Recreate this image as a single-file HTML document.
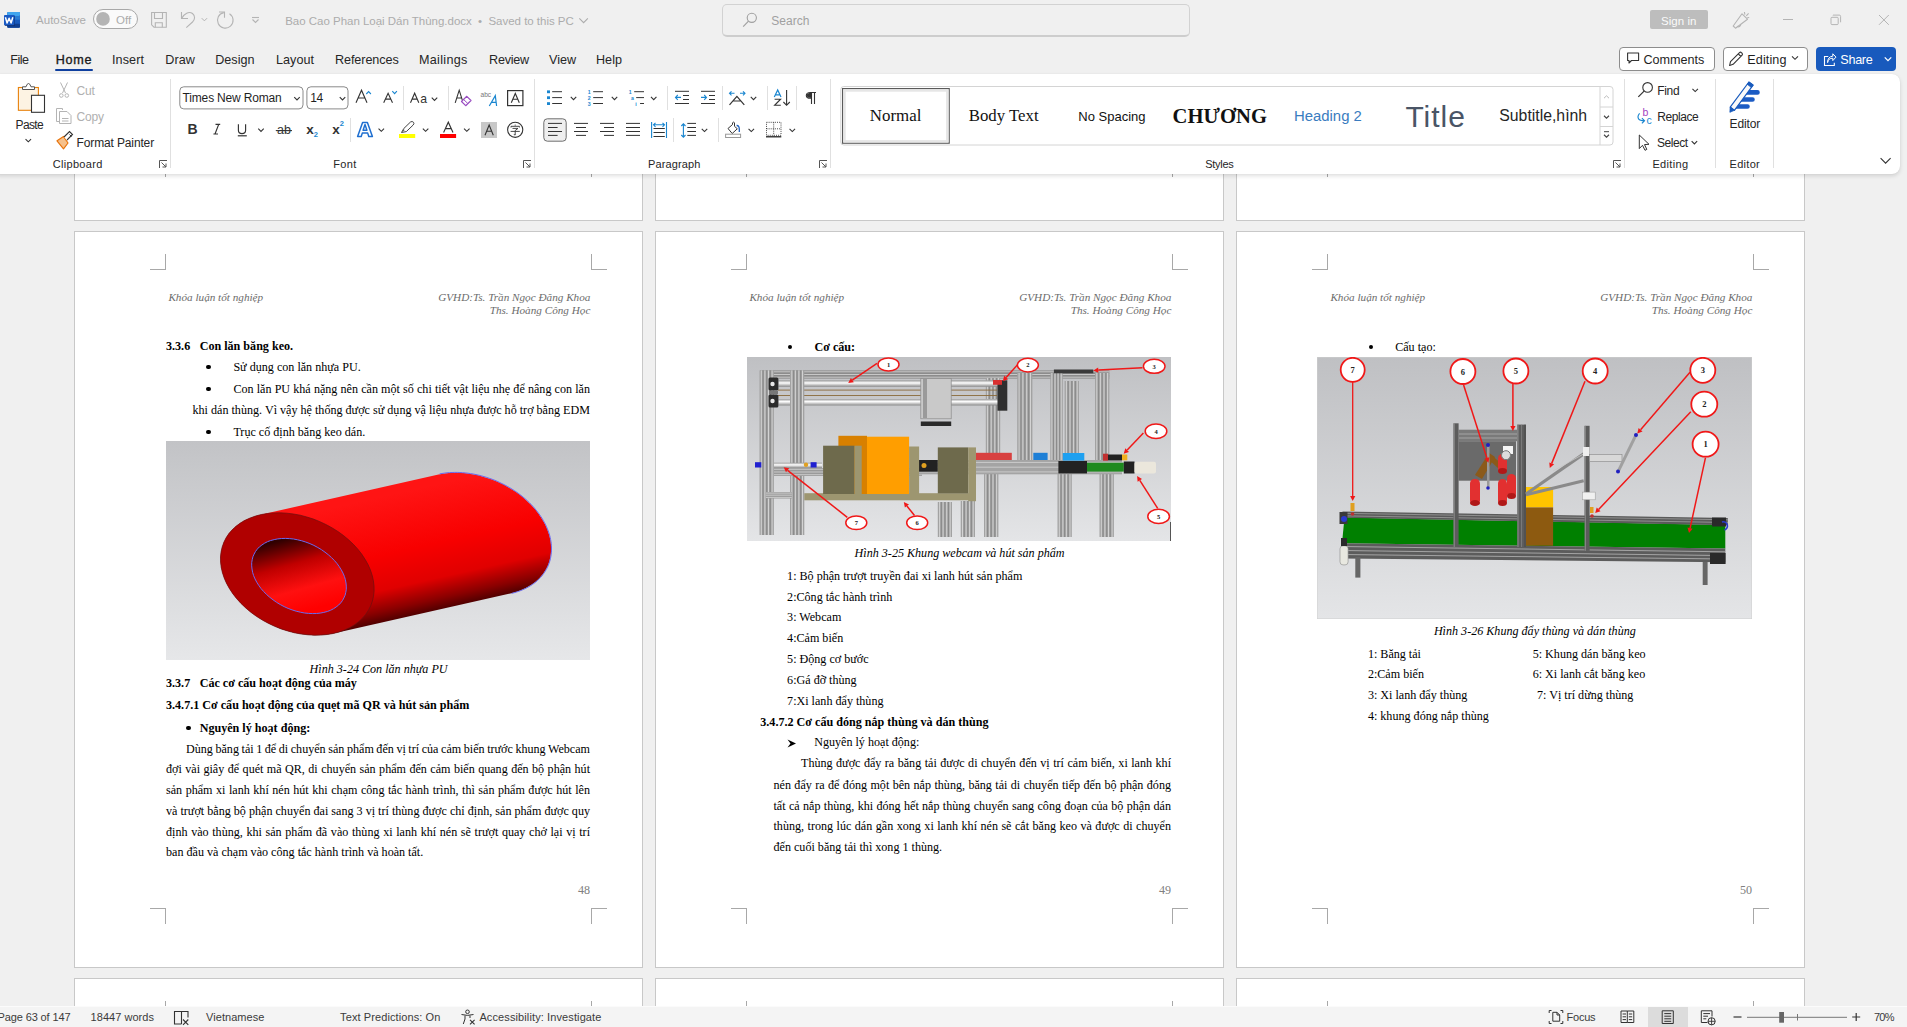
<!DOCTYPE html>
<html><head><meta charset="utf-8"><style>
*{margin:0;padding:0}
html,body{width:1907px;height:1027px;overflow:hidden}
body{position:relative;background:#f0f0f0;font-family:'Liberation Sans',sans-serif}
.a{position:absolute}
.t{position:absolute;white-space:pre}
.j{text-align:justify;text-align-last:justify;white-space:normal;overflow:hidden;height:20px}
.pg{background:#fff;border:1px solid #c8c8c8;box-sizing:border-box}
</style></head><body>
<div class="a pg" style="left:74px;top:-516px;width:569px;height:737px"></div>
<div class="a" style="left:150px;top:161px;width:16px;height:1px;background:#a8a8a8;"></div>
<div class="a" style="left:165px;top:161px;width:1px;height:16px;background:#a8a8a8;"></div>
<div class="a" style="left:591px;top:161px;width:1px;height:16px;background:#a8a8a8;"></div>
<div class="a" style="left:591px;top:161px;width:16px;height:1px;background:#a8a8a8;"></div>
<div class="a pg" style="left:655px;top:-516px;width:569px;height:737px"></div>
<div class="a" style="left:731px;top:161px;width:16px;height:1px;background:#a8a8a8;"></div>
<div class="a" style="left:746px;top:161px;width:1px;height:16px;background:#a8a8a8;"></div>
<div class="a" style="left:1172px;top:161px;width:1px;height:16px;background:#a8a8a8;"></div>
<div class="a" style="left:1172px;top:161px;width:16px;height:1px;background:#a8a8a8;"></div>
<div class="a pg" style="left:1236px;top:-516px;width:569px;height:737px"></div>
<div class="a" style="left:1312px;top:161px;width:16px;height:1px;background:#a8a8a8;"></div>
<div class="a" style="left:1327px;top:161px;width:1px;height:16px;background:#a8a8a8;"></div>
<div class="a" style="left:1753px;top:161px;width:1px;height:16px;background:#a8a8a8;"></div>
<div class="a" style="left:1753px;top:161px;width:16px;height:1px;background:#a8a8a8;"></div>
<div class="a pg" style="left:74px;top:978px;width:569px;height:737px"></div>
<div class="a" style="left:150px;top:1016px;width:16px;height:1px;background:#a8a8a8;"></div>
<div class="a" style="left:165px;top:1001px;width:1px;height:16px;background:#a8a8a8;"></div>
<div class="a" style="left:591px;top:1001px;width:1px;height:16px;background:#a8a8a8;"></div>
<div class="a" style="left:591px;top:1016px;width:16px;height:1px;background:#a8a8a8;"></div>
<div class="a pg" style="left:655px;top:978px;width:569px;height:737px"></div>
<div class="a" style="left:731px;top:1016px;width:16px;height:1px;background:#a8a8a8;"></div>
<div class="a" style="left:746px;top:1001px;width:1px;height:16px;background:#a8a8a8;"></div>
<div class="a" style="left:1172px;top:1001px;width:1px;height:16px;background:#a8a8a8;"></div>
<div class="a" style="left:1172px;top:1016px;width:16px;height:1px;background:#a8a8a8;"></div>
<div class="a pg" style="left:1236px;top:978px;width:569px;height:737px"></div>
<div class="a" style="left:1312px;top:1016px;width:16px;height:1px;background:#a8a8a8;"></div>
<div class="a" style="left:1327px;top:1001px;width:1px;height:16px;background:#a8a8a8;"></div>
<div class="a" style="left:1753px;top:1001px;width:1px;height:16px;background:#a8a8a8;"></div>
<div class="a" style="left:1753px;top:1016px;width:16px;height:1px;background:#a8a8a8;"></div>
<div class="a pg" style="left:74px;top:231px;width:569px;height:737px"></div>
<div class="a" style="left:150px;top:269px;width:16px;height:1px;background:#a8a8a8;"></div>
<div class="a" style="left:165px;top:254px;width:1px;height:16px;background:#a8a8a8;"></div>
<div class="a" style="left:591px;top:254px;width:1px;height:16px;background:#a8a8a8;"></div>
<div class="a" style="left:591px;top:269px;width:16px;height:1px;background:#a8a8a8;"></div>
<div class="a" style="left:150px;top:908px;width:16px;height:1px;background:#a8a8a8;"></div>
<div class="a" style="left:165px;top:908px;width:1px;height:16px;background:#a8a8a8;"></div>
<div class="a" style="left:591px;top:908px;width:1px;height:16px;background:#a8a8a8;"></div>
<div class="a" style="left:591px;top:908px;width:16px;height:1px;background:#a8a8a8;"></div>
<div class="t" style="left:168.40px;top:286.82px;font-size:11.2px;line-height:20px;color:#6c6c6c;font-family:'Liberation Serif',serif;font-style:italic;">Khóa luận tốt nghiệp</div>
<div class="t" style="left:340.40px;top:286.82px;font-size:11.2px;line-height:20px;color:#6c6c6c;font-family:'Liberation Serif',serif;font-style:italic;width:250.00px;text-align:right;">GVHD:Ts. Trần Ngọc Đăng Khoa</div>
<div class="t" style="left:340.40px;top:299.52px;font-size:11.2px;line-height:20px;color:#6c6c6c;font-family:'Liberation Serif',serif;font-style:italic;width:250.00px;text-align:right;">Ths. Hoàng Công Học</div>
<div class="t" style="left:166.00px;top:335.92px;font-size:12.1px;line-height:20px;color:#000;font-family:'Liberation Serif',serif;font-weight:bold;">3.3.6</div>
<div class="t" style="left:199.70px;top:335.92px;font-size:12.1px;line-height:20px;color:#000;font-family:'Liberation Serif',serif;font-weight:bold;">Con lăn băng keo.</div>
<div class="a" style="left:206.30px;top:365.10px;width:4.4px;height:4.4px;border-radius:50%;background:#000"></div>
<div class="t" style="left:233.40px;top:356.92px;font-size:12.1px;line-height:20px;color:#000;font-family:'Liberation Serif',serif;">Sử dụng con lăn nhựa PU.</div>
<div class="a" style="left:206.30px;top:387.10px;width:4.4px;height:4.4px;border-radius:50%;background:#000"></div>
<div class="t" style="word-spacing:0.134px;left:233.40px;top:378.92px;font-size:12.1px;line-height:20px;color:#000;font-family:'Liberation Serif',serif;">Con lăn PU khá nặng nên cần một số chi tiết vật liệu nhẹ để nâng con lăn</div>
<div class="t" style="word-spacing:0.018px;left:192.50px;top:399.92px;font-size:12.1px;line-height:20px;color:#000;font-family:'Liberation Serif',serif;">khi dán thùng. Vì vậy hệ thống được sử dụng vậ liệu nhựa được hỗ trợ bằng EDM</div>
<div class="a" style="left:206.30px;top:430.10px;width:4.4px;height:4.4px;border-radius:50%;background:#000"></div>
<div class="t" style="left:233.40px;top:421.92px;font-size:12.1px;line-height:20px;color:#000;font-family:'Liberation Serif',serif;">Trục cố định băng keo dán.</div>
<svg class="a" style="left:166px;top:441px;" width="424" height="219" viewBox="0 0 424 219"><defs><linearGradient id="bg1" x1="0" y1="0" x2="0" y2="1"><stop offset="0" stop-color="#c2c3c6"/><stop offset="1" stop-color="#e6e7e9"/></linearGradient><linearGradient id="body1" gradientUnits="userSpaceOnUse" x1="232" y1="52" x2="260" y2="176"><stop offset="0" stop-color="#ff1414"/><stop offset="0.45" stop-color="#f80000"/><stop offset="0.72" stop-color="#e00000"/><stop offset="0.88" stop-color="#8a0000"/><stop offset="1" stop-color="#3a0000"/></linearGradient><linearGradient id="hole1" gradientUnits="userSpaceOnUse" x1="120" y1="98" x2="140" y2="170"><stop offset="0" stop-color="#300000"/><stop offset="0.35" stop-color="#c00000"/><stop offset="0.7" stop-color="#ff1010"/><stop offset="1" stop-color="#ff0000"/></linearGradient></defs><rect width="424" height="219" fill="url(#bg1)"/><path d="M54.5 115.8 L55.1 110.8 L56.2 105.9 L57.9 101.2 L60.1 96.8 L62.9 92.6 L66.2 88.8 L70.0 85.2 L74.3 82.1 L79.0 79.3 L84.1 77.0 L89.6 75.0 L95.4 73.5 L272.5 33.4 L278.6 32.4 L284.8 31.8 L291.3 31.7 L297.9 32.1 L304.6 32.9 L311.3 34.1 L317.9 35.9 L324.6 38.0 L331.0 40.6 L337.4 43.6 L343.4 46.9 L349.3 50.6 L354.8 54.6 L359.9 58.9 L364.7 63.5 L369.1 68.3 L372.9 73.2 L376.3 78.4 L379.2 83.6 L381.5 88.9 L383.3 94.3 L384.5 99.6 L385.1 104.9 L385.2 110.0 L384.6 115.1 L383.5 120.0 L381.8 124.7 L379.6 129.1 L376.8 133.3 L373.5 137.1 L369.6 140.7 L365.4 143.8 L360.7 146.6 L355.6 148.9 L350.1 150.9 L344.3 152.4 L167.2 192.5 L161.2 193.5 L154.9 194.1 L148.4 194.2 L141.8 193.8 L135.1 193.0 L128.4 191.8 L121.8 190.0 L115.2 187.9 L108.7 185.3 L102.3 182.3 L96.3 179.0 L90.4 175.3 L84.9 171.3 L79.8 167.0 L75.0 162.4 L70.6 157.6 L66.8 152.7 L63.4 147.5 L60.5 142.3 L58.2 137.0 L56.4 131.6 L55.2 126.3 L54.6 121.0 Z" fill="url(#body1)"/><path d="M273.6 32.9 L276.0 32.5 L278.5 32.1 L281.0 31.8 L283.5 31.6 L286.1 31.5 L288.6 31.4 L291.3 31.4 L293.9 31.5 L296.5 31.7 L299.2 31.9 L301.9 32.2 L304.6 32.6 L307.3 33.0 L310.0 33.6 L312.7 34.2 L315.3 34.8 L318.0 35.6 L320.7 36.4 L323.3 37.3 L326.0 38.2 L328.6 39.2 L331.2 40.3 L333.7 41.5 L336.2 42.7 L338.7 43.9 L341.2 45.3 L343.6 46.6 L346.0 48.1 L348.3 49.6 L350.6 51.1 L352.8 52.7 L355.0 54.4 L357.1 56.1 L359.2 57.8 L361.2 59.6 L363.1 61.4 L365.0 63.3 L366.8 65.2 L368.5 67.1 L370.1 69.1 L371.7 71.1 L373.2 73.1 L374.6 75.2 L376.0 77.2 L377.2 79.3 L378.4 81.4 L379.5 83.5 L380.5 85.7 L381.4 87.8 L382.2 89.9 L383.0 92.1 L383.6 94.2 L384.2 96.4 L384.6 98.5 L385.0 100.6 L385.3 102.8 L385.4 104.9 L385.5 107.0 L385.5 109.1 L385.4 111.1 L385.2 113.2 L384.9 115.2 L384.5 117.2 L384.1 119.1 L383.5 121.0 L382.8 122.9 L382.1 124.8 L381.3 126.6 L380.3 128.4 L379.3 130.1 L378.2 131.8 L377.0 133.4 L375.8 135.0 L374.4 136.6 L373.0 138.1 L371.5 139.5 L369.9 140.9 L368.2 142.2 L366.5 143.4 L364.7 144.6 L362.8 145.7 L360.8 146.8 L358.8 147.8 L356.8 148.7 L354.6 149.6 L352.5 150.4 L350.2 151.1 L347.9 151.8 L345.6 152.4" fill="none" stroke="#6a6af0" stroke-width="1"/><path d="M204.7 164.8 L202.5 169.2 L199.7 173.4 L196.4 177.2 L192.6 180.7 L188.3 183.9 L183.6 186.7 L178.5 189.0 L173.0 191.0 L167.2 192.5 L161.2 193.5 L154.9 194.1 L148.4 194.2 L141.8 193.8 L135.1 193.0 L128.4 191.8 L121.8 190.0 L115.1 187.9 L108.7 185.3 L102.3 182.3 L96.3 179.0 L90.4 175.3 L84.9 171.3 L79.8 167.0 L75.0 162.4 L70.6 157.6 L66.8 152.7 L63.4 147.5 L60.5 142.3 L58.2 137.0 L56.4 131.6 L55.2 126.3 L54.6 121.0 L54.5 115.9 L55.1 110.8 L56.2 105.9 L57.9 101.2 L60.1 96.8 L62.9 92.6 L66.2 88.8 L70.0 85.3 L74.3 82.1 L79.0 79.3 L84.1 77.0 L89.6 75.0 L95.4 73.5 L101.4 72.5 L107.7 71.9 L114.2 71.8 L120.8 72.2 L127.5 73.0 L134.2 74.2 L140.8 76.0 L147.5 78.1 L153.9 80.7 L160.3 83.7 L166.3 87.0 L172.2 90.7 L177.7 94.7 L182.8 99.0 L187.6 103.6 L192.0 108.4 L195.8 113.3 L199.2 118.5 L202.1 123.7 L204.4 129.0 L206.2 134.4 L207.4 139.7 L208.0 145.0 L208.1 150.1 L207.5 155.2 L206.4 160.1 Z" fill="#b00000" stroke="#6a1010" stroke-width="0.7"/><path d="M177.9 156.9 L176.5 159.5 L174.7 161.9 L172.6 164.1 L170.1 166.0 L167.4 167.8 L164.5 169.3 L161.3 170.5 L157.8 171.4 L154.2 172.1 L150.5 172.5 L146.6 172.6 L142.6 172.4 L138.5 172.0 L134.4 171.2 L130.2 170.2 L126.1 168.9 L122.1 167.4 L118.1 165.6 L114.2 163.5 L110.5 161.3 L107.0 158.8 L103.6 156.2 L100.5 153.4 L97.6 150.5 L95.0 147.5 L92.7 144.3 L90.7 141.1 L89.0 137.9 L87.6 134.6 L86.6 131.3 L86.0 128.0 L85.7 124.9 L85.7 121.7 L86.2 118.7 L86.9 115.8 L88.1 113.1 L89.5 110.5 L91.3 108.1 L93.4 105.9 L95.9 104.0 L98.6 102.2 L101.5 100.7 L104.7 99.5 L108.2 98.6 L111.8 97.9 L115.5 97.5 L119.4 97.4 L123.4 97.6 L127.5 98.0 L131.6 98.8 L135.8 99.8 L139.9 101.1 L143.9 102.6 L147.9 104.4 L151.8 106.5 L155.5 108.7 L159.0 111.2 L162.4 113.8 L165.5 116.6 L168.4 119.5 L171.0 122.5 L173.3 125.7 L175.3 128.9 L177.0 132.1 L178.4 135.4 L179.4 138.7 L180.0 142.0 L180.3 145.1 L180.3 148.3 L179.8 151.3 L179.1 154.2 Z" fill="url(#hole1)" stroke="#6a6af0" stroke-width="1"/></svg>
<div class="t" style="left:309.60px;top:659.42px;font-size:12.1px;line-height:20px;color:#000;font-family:'Liberation Serif',serif;font-style:italic;">Hình 3-24 Con lăn nhựa PU</div>
<div class="t" style="left:166.00px;top:673.42px;font-size:12.1px;line-height:20px;color:#000;font-family:'Liberation Serif',serif;font-weight:bold;">3.3.7</div>
<div class="t" style="left:199.70px;top:673.42px;font-size:12.1px;line-height:20px;color:#000;font-family:'Liberation Serif',serif;font-weight:bold;">Các cơ cấu hoạt động của máy</div>
<div class="t" style="left:166.00px;top:694.72px;font-size:12.1px;line-height:20px;color:#000;font-family:'Liberation Serif',serif;font-weight:bold;">3.4.7.1 Cơ cấu hoạt động của quẹt mã QR và hút sản phẩm</div>
<div class="a" style="left:186.40px;top:725.70px;width:4.4px;height:4.4px;border-radius:50%;background:#000"></div>
<div class="t" style="left:199.70px;top:717.52px;font-size:12.1px;line-height:20px;color:#000;font-family:'Liberation Serif',serif;font-weight:bold;">Nguyên lý hoạt động:</div>
<div class="t" style="word-spacing:-0.456px;left:186.00px;top:738.52px;font-size:12.1px;line-height:20px;color:#000;font-family:'Liberation Serif',serif;">Dùng băng tải 1 để di chuyển sản phẩm đến vị trí của cảm biến trước khung Webcam</div>
<div class="t" style="word-spacing:0.418px;left:166.00px;top:759.32px;font-size:12.1px;line-height:20px;color:#000;font-family:'Liberation Serif',serif;">đợi vài giây để quét mã QR, di chuyển sản phẩm đến cảm biến quang đến bộ phận hút</div>
<div class="t" style="word-spacing:0.501px;left:166.00px;top:780.12px;font-size:12.1px;line-height:20px;color:#000;font-family:'Liberation Serif',serif;">sản phẩm xi lanh khí nén hút khi chạm công tắc hành trình, thì sản phẩm được hút lên</div>
<div class="t" style="word-spacing:0.032px;left:166.00px;top:800.92px;font-size:12.1px;line-height:20px;color:#000;font-family:'Liberation Serif',serif;">và trượt bằng bộ phận chuyển đai sang 3 vị trí thùng được chỉ định, sản phẩm được quy</div>
<div class="t" style="word-spacing:0.614px;left:166.00px;top:821.62px;font-size:12.1px;line-height:20px;color:#000;font-family:'Liberation Serif',serif;">định vào thùng, khi sản phẩm đã vào thùng xi lanh khí nén sẽ trượt quay chở lại vị trí</div>
<div class="t" style="left:166.00px;top:842.42px;font-size:12.1px;line-height:20px;color:#000;font-family:'Liberation Serif',serif;">ban đầu và chạm vào công tắc hành trình và hoàn tất.</div>
<div class="t" style="left:550.00px;top:880.42px;font-size:12.1px;line-height:20px;color:#808080;font-family:'Liberation Serif',serif;width:40.00px;text-align:right;">48</div>
<div class="a pg" style="left:655px;top:231px;width:569px;height:737px"></div>
<div class="a" style="left:731px;top:269px;width:16px;height:1px;background:#a8a8a8;"></div>
<div class="a" style="left:746px;top:254px;width:1px;height:16px;background:#a8a8a8;"></div>
<div class="a" style="left:1172px;top:254px;width:1px;height:16px;background:#a8a8a8;"></div>
<div class="a" style="left:1172px;top:269px;width:16px;height:1px;background:#a8a8a8;"></div>
<div class="a" style="left:731px;top:908px;width:16px;height:1px;background:#a8a8a8;"></div>
<div class="a" style="left:746px;top:908px;width:1px;height:16px;background:#a8a8a8;"></div>
<div class="a" style="left:1172px;top:908px;width:1px;height:16px;background:#a8a8a8;"></div>
<div class="a" style="left:1172px;top:908px;width:16px;height:1px;background:#a8a8a8;"></div>
<div class="t" style="left:749.40px;top:286.82px;font-size:11.2px;line-height:20px;color:#6c6c6c;font-family:'Liberation Serif',serif;font-style:italic;">Khóa luận tốt nghiệp</div>
<div class="t" style="left:921.40px;top:286.82px;font-size:11.2px;line-height:20px;color:#6c6c6c;font-family:'Liberation Serif',serif;font-style:italic;width:250.00px;text-align:right;">GVHD:Ts. Trần Ngọc Đăng Khoa</div>
<div class="t" style="left:921.40px;top:299.52px;font-size:11.2px;line-height:20px;color:#6c6c6c;font-family:'Liberation Serif',serif;font-style:italic;width:250.00px;text-align:right;">Ths. Hoàng Công Học</div>
<div class="a" style="left:787.50px;top:345.10px;width:4.4px;height:4.4px;border-radius:50%;background:#000"></div>
<div class="t" style="left:814.50px;top:336.92px;font-size:12.1px;line-height:20px;color:#000;font-family:'Liberation Serif',serif;font-weight:bold;">Cơ cấu:</div>
<svg class="a" style="left:747px;top:357px;" width="424" height="184" viewBox="0 0 424 184"><defs><linearGradient id="bg2" x1="0" y1="0" x2="0" y2="1"><stop offset="0" stop-color="#bfc0c3"/><stop offset="1" stop-color="#e4e5e7"/></linearGradient><linearGradient id="rod" x1="0" y1="0" x2="0" y2="1"><stop offset="0" stop-color="#9a9a9a"/><stop offset="0.4" stop-color="#ffffff"/><stop offset="1" stop-color="#8a8a8a"/></linearGradient></defs><rect width="424" height="184" fill="url(#bg2)"/><rect x="13.0" y="13.4" width="349.4" height="8.2" fill="#8c8c8c"/><path d="M13.0 14.8 H362.4" stroke="#cfcfcf" stroke-width="0.9"/><path d="M13.0 17.5 H362.4" stroke="#cfcfcf" stroke-width="0.9"/><path d="M13.0 20.2 H362.4" stroke="#cfcfcf" stroke-width="0.9"/><rect x="238.8" y="21.0" width="14.4" height="83.0" fill="#a2a2a2"/><path d="M240.6 21.0 V104.0" stroke="#d8d8d8" stroke-width="0.9"/><path d="M242.4 21.0 V104.0" stroke="#707070" stroke-width="0.5"/><path d="M244.2 21.0 V104.0" stroke="#d8d8d8" stroke-width="0.9"/><path d="M246.0 21.0 V104.0" stroke="#707070" stroke-width="0.5"/><path d="M247.8 21.0 V104.0" stroke="#d8d8d8" stroke-width="0.9"/><path d="M249.6 21.0 V104.0" stroke="#707070" stroke-width="0.5"/><path d="M251.4 21.0 V104.0" stroke="#d8d8d8" stroke-width="0.9"/><rect x="270.2" y="16.0" width="15.2" height="88.0" fill="#a2a2a2"/><path d="M272.1 16.0 V104.0" stroke="#d8d8d8" stroke-width="0.9"/><path d="M274.0 16.0 V104.0" stroke="#707070" stroke-width="0.5"/><path d="M275.9 16.0 V104.0" stroke="#d8d8d8" stroke-width="0.9"/><path d="M277.8 16.0 V104.0" stroke="#707070" stroke-width="0.5"/><path d="M279.7 16.0 V104.0" stroke="#d8d8d8" stroke-width="0.9"/><path d="M281.6 16.0 V104.0" stroke="#707070" stroke-width="0.5"/><path d="M283.5 16.0 V104.0" stroke="#d8d8d8" stroke-width="0.9"/><rect x="303.3" y="16.0" width="12.5" height="88.0" fill="#a2a2a2"/><path d="M304.9 16.0 V104.0" stroke="#d8d8d8" stroke-width="0.9"/><path d="M306.4 16.0 V104.0" stroke="#707070" stroke-width="0.5"/><path d="M308.0 16.0 V104.0" stroke="#d8d8d8" stroke-width="0.9"/><path d="M309.6 16.0 V104.0" stroke="#707070" stroke-width="0.5"/><path d="M311.1 16.0 V104.0" stroke="#d8d8d8" stroke-width="0.9"/><path d="M312.7 16.0 V104.0" stroke="#707070" stroke-width="0.5"/><path d="M314.2 16.0 V104.0" stroke="#d8d8d8" stroke-width="0.9"/><rect x="317.6" y="24.0" width="14.4" height="80.0" fill="#a2a2a2"/><path d="M319.4 24.0 V104.0" stroke="#d8d8d8" stroke-width="0.9"/><path d="M321.2 24.0 V104.0" stroke="#707070" stroke-width="0.5"/><path d="M323.0 24.0 V104.0" stroke="#d8d8d8" stroke-width="0.9"/><path d="M324.8 24.0 V104.0" stroke="#707070" stroke-width="0.5"/><path d="M326.6 24.0 V104.0" stroke="#d8d8d8" stroke-width="0.9"/><path d="M328.4 24.0 V104.0" stroke="#707070" stroke-width="0.5"/><path d="M330.2 24.0 V104.0" stroke="#d8d8d8" stroke-width="0.9"/><rect x="348.0" y="16.0" width="14.4" height="88.0" fill="#a2a2a2"/><path d="M349.8 16.0 V104.0" stroke="#d8d8d8" stroke-width="0.9"/><path d="M351.6 16.0 V104.0" stroke="#707070" stroke-width="0.5"/><path d="M353.4 16.0 V104.0" stroke="#d8d8d8" stroke-width="0.9"/><path d="M355.2 16.0 V104.0" stroke="#707070" stroke-width="0.5"/><path d="M357.0 16.0 V104.0" stroke="#d8d8d8" stroke-width="0.9"/><path d="M358.8 16.0 V104.0" stroke="#707070" stroke-width="0.5"/><path d="M360.6 16.0 V104.0" stroke="#d8d8d8" stroke-width="0.9"/><rect x="31.4" y="23.3" width="225" height="6.5" fill="url(#rod)"/><rect x="31.4" y="42" width="225" height="6.5" fill="url(#rod)"/><path d="M31 33.1 H250 M31 38.5 H250" stroke="#8a6a3a" stroke-width="0.9"/><rect x="250.5" y="23.3" width="9.8" height="30.4" fill="#2f2f2f"/><rect x="246" y="23" width="9" height="4.8" fill="#d83030"/><rect x="173.8" y="21.5" width="30.4" height="40.3" fill="#c9c9c9" stroke="#8a8a8a" stroke-width="0.7"/><rect x="176" y="22" width="4" height="39" fill="#9a9a9a"/><rect x="173.8" y="64.5" width="30.4" height="4.5" fill="#2a2a2a"/><rect x="306.9" y="12.5" width="39.4" height="3.8" fill="#3a3a3a"/><rect x="12.5" y="13.4" width="14.4" height="164.6" fill="#a2a2a2"/><path d="M14.3 13.4 V178.0" stroke="#d8d8d8" stroke-width="0.9"/><path d="M16.1 13.4 V178.0" stroke="#707070" stroke-width="0.5"/><path d="M17.9 13.4 V178.0" stroke="#d8d8d8" stroke-width="0.9"/><path d="M19.7 13.4 V178.0" stroke="#707070" stroke-width="0.5"/><path d="M21.5 13.4 V178.0" stroke="#d8d8d8" stroke-width="0.9"/><path d="M23.3 13.4 V178.0" stroke="#707070" stroke-width="0.5"/><path d="M25.1 13.4 V178.0" stroke="#d8d8d8" stroke-width="0.9"/><rect x="43.0" y="13.4" width="14.3" height="164.6" fill="#a2a2a2"/><path d="M44.8 13.4 V178.0" stroke="#d8d8d8" stroke-width="0.9"/><path d="M46.6 13.4 V178.0" stroke="#707070" stroke-width="0.5"/><path d="M48.4 13.4 V178.0" stroke="#d8d8d8" stroke-width="0.9"/><path d="M50.1 13.4 V178.0" stroke="#707070" stroke-width="0.5"/><path d="M51.9 13.4 V178.0" stroke="#d8d8d8" stroke-width="0.9"/><path d="M53.7 13.4 V178.0" stroke="#707070" stroke-width="0.5"/><path d="M55.5 13.4 V178.0" stroke="#d8d8d8" stroke-width="0.9"/><rect x="21.5" y="20.6" width="9.9" height="13" rx="1.5" fill="#2b2b2b"/><rect x="21.5" y="37.5" width="9.9" height="13" rx="1.5" fill="#2b2b2b"/><circle cx="25.5" cy="27" r="2.2" fill="#e8e8e8"/><circle cx="25.5" cy="44" r="2.2" fill="#e8e8e8"/><rect x="22" y="34" width="9" height="3" fill="#777"/><rect x="27.0" y="111.0" width="148.0" height="8.0" fill="#9a9a9a"/><path d="M27.0 112.3 H175.0" stroke="#cfcfcf" stroke-width="0.9"/><path d="M27.0 115.0 H175.0" stroke="#cfcfcf" stroke-width="0.9"/><path d="M27.0 117.7 H175.0" stroke="#cfcfcf" stroke-width="0.9"/><rect x="18.8" y="135.0" width="26.0" height="6.5" fill="#9a9a9a"/><path d="M18.8 136.1 H44.8" stroke="#cfcfcf" stroke-width="0.9"/><path d="M18.8 138.2 H44.8" stroke="#cfcfcf" stroke-width="0.9"/><path d="M18.8 140.4 H44.8" stroke="#cfcfcf" stroke-width="0.9"/><rect x="27" y="105.7" width="48" height="5.3" fill="url(#rod)"/><rect x="8" y="105.2" width="6.3" height="5.3" fill="#2020d0"/><rect x="63.6" y="105.2" width="6" height="5.3" fill="#2020d0"/><circle cx="59" cy="107.8" r="2.2" fill="#e0a020"/><rect x="190.8" y="145.0" width="14.2" height="35.0" fill="#a2a2a2"/><path d="M192.6 145.0 V180.0" stroke="#d8d8d8" stroke-width="0.9"/><path d="M194.4 145.0 V180.0" stroke="#707070" stroke-width="0.5"/><path d="M196.1 145.0 V180.0" stroke="#d8d8d8" stroke-width="0.9"/><path d="M197.9 145.0 V180.0" stroke="#707070" stroke-width="0.5"/><path d="M199.7 145.0 V180.0" stroke="#d8d8d8" stroke-width="0.9"/><path d="M201.5 145.0 V180.0" stroke="#707070" stroke-width="0.5"/><path d="M203.2 145.0 V180.0" stroke="#d8d8d8" stroke-width="0.9"/><rect x="213.7" y="144.0" width="14.3" height="36.0" fill="#a2a2a2"/><path d="M215.5 144.0 V180.0" stroke="#d8d8d8" stroke-width="0.9"/><path d="M217.3 144.0 V180.0" stroke="#707070" stroke-width="0.5"/><path d="M219.1 144.0 V180.0" stroke="#d8d8d8" stroke-width="0.9"/><path d="M220.8 144.0 V180.0" stroke="#707070" stroke-width="0.5"/><path d="M222.6 144.0 V180.0" stroke="#d8d8d8" stroke-width="0.9"/><path d="M224.4 144.0 V180.0" stroke="#707070" stroke-width="0.5"/><path d="M226.2 144.0 V180.0" stroke="#d8d8d8" stroke-width="0.9"/><rect x="237.0" y="117.0" width="14.4" height="63.0" fill="#a2a2a2"/><path d="M238.8 117.0 V180.0" stroke="#d8d8d8" stroke-width="0.9"/><path d="M240.6 117.0 V180.0" stroke="#707070" stroke-width="0.5"/><path d="M242.4 117.0 V180.0" stroke="#d8d8d8" stroke-width="0.9"/><path d="M244.2 117.0 V180.0" stroke="#707070" stroke-width="0.5"/><path d="M246.0 117.0 V180.0" stroke="#d8d8d8" stroke-width="0.9"/><path d="M247.8 117.0 V180.0" stroke="#707070" stroke-width="0.5"/><path d="M249.6 117.0 V180.0" stroke="#d8d8d8" stroke-width="0.9"/><rect x="310.5" y="117.0" width="14.3" height="63.0" fill="#a2a2a2"/><path d="M312.3 117.0 V180.0" stroke="#d8d8d8" stroke-width="0.9"/><path d="M314.1 117.0 V180.0" stroke="#707070" stroke-width="0.5"/><path d="M315.9 117.0 V180.0" stroke="#d8d8d8" stroke-width="0.9"/><path d="M317.6 117.0 V180.0" stroke="#707070" stroke-width="0.5"/><path d="M319.4 117.0 V180.0" stroke="#d8d8d8" stroke-width="0.9"/><path d="M321.2 117.0 V180.0" stroke="#707070" stroke-width="0.5"/><path d="M323.0 117.0 V180.0" stroke="#d8d8d8" stroke-width="0.9"/><rect x="352.5" y="117.0" width="14.4" height="63.0" fill="#a2a2a2"/><path d="M354.3 117.0 V180.0" stroke="#d8d8d8" stroke-width="0.9"/><path d="M356.1 117.0 V180.0" stroke="#707070" stroke-width="0.5"/><path d="M357.9 117.0 V180.0" stroke="#d8d8d8" stroke-width="0.9"/><path d="M359.7 117.0 V180.0" stroke="#707070" stroke-width="0.5"/><path d="M361.5 117.0 V180.0" stroke="#d8d8d8" stroke-width="0.9"/><path d="M363.3 117.0 V180.0" stroke="#707070" stroke-width="0.5"/><path d="M365.1 117.0 V180.0" stroke="#d8d8d8" stroke-width="0.9"/><rect x="172.0" y="103.0" width="203.0" height="14.3" fill="#a4a4a4"/><path d="M172.0 105.4 H375.0" stroke="#cfcfcf" stroke-width="0.9"/><path d="M172.0 110.2 H375.0" stroke="#cfcfcf" stroke-width="0.9"/><path d="M172.0 114.9 H375.0" stroke="#cfcfcf" stroke-width="0.9"/><rect x="229" y="95.8" width="35.8" height="7.2" fill="#d84040"/><rect x="286.3" y="95.8" width="14.3" height="7.2" fill="#1e7fd6"/><rect x="315.8" y="96" width="21.5" height="7.6" fill="#1ea0f0"/><rect x="311.4" y="104" width="28.6" height="12.4" fill="#222"/><rect x="340" y="105.7" width="36.8" height="8.9" fill="#1f8a1f"/><rect x="376.8" y="104.5" width="10.7" height="12" fill="#222"/><rect x="387.5" y="104.8" width="21.5" height="11.6" rx="2" fill="#ebe7dc"/><rect x="356" y="96.7" width="5" height="7" fill="#c03030"/><rect x="361" y="97.5" width="14" height="5.8" fill="#222"/><rect x="375" y="97.5" width="5.3" height="5.8" fill="#f0b020"/><rect x="172" y="103" width="18.8" height="11.7" fill="#222"/><circle cx="177" cy="108.5" r="2.5" fill="#e0a020"/><rect x="57.3" y="136.2" width="171.7" height="7.1" fill="#9d9670"/><rect x="91.4" y="78.8" width="28.6" height="58.2" fill="#d88000"/><rect x="120" y="79.7" width="42.1" height="57.3" fill="#ff9e00"/><rect x="76.1" y="88.7" width="31.4" height="48.3" fill="#6e6a4c"/><rect x="107.5" y="88.7" width="7.2" height="48.3" fill="#9d9670"/><rect x="162.1" y="89.5" width="10" height="47.5" fill="#9d9670"/><rect x="190.8" y="90.4" width="30.4" height="46" fill="#6e6a4c"/><rect x="221.2" y="90.4" width="7.8" height="53.8" fill="#9d9670"/><path d="M130.0 6.3 L105.3 23.2" stroke="#f01818" stroke-width="1.5"/><path d="M101.2 26.0 L103.9 21.0 L106.8 25.3 Z" fill="#f01818"/><ellipse cx="141.5" cy="7.5" rx="10.5" ry="6.5" fill="#fff" stroke="#f01818" stroke-width="1.5"/><text x="141.5" y="9.8" font-family="Liberation Serif" font-weight="bold" font-size="6.5" text-anchor="middle" fill="#222">1</text><path d="M271.0 7.2 L259.1 20.5" stroke="#f01818" stroke-width="1.5"/><path d="M255.8 24.2 L257.2 18.7 L261.1 22.2 Z" fill="#f01818"/><ellipse cx="280.9" cy="8.1" rx="10.5" ry="6.8" fill="#fff" stroke="#f01818" stroke-width="1.5"/><text x="280.9" y="10.4" font-family="Liberation Serif" font-weight="bold" font-size="6.5" text-anchor="middle" fill="#222">2</text><path d="M395.5 10.7 L351.3 13.1" stroke="#f01818" stroke-width="1.5"/><path d="M346.3 13.4 L351.2 10.5 L351.4 15.7 Z" fill="#f01818"/><ellipse cx="407.2" cy="9.3" rx="10.8" ry="7" fill="#fff" stroke="#f01818" stroke-width="1.5"/><text x="407.2" y="11.6" font-family="Liberation Serif" font-weight="bold" font-size="6.5" text-anchor="middle" fill="#222">3</text><path d="M396.4 76.1 L380.2 93.1" stroke="#f01818" stroke-width="1.5"/><path d="M376.7 96.7 L378.3 91.3 L382.0 94.9 Z" fill="#f01818"/><ellipse cx="409.0" cy="74.3" rx="10.8" ry="7.2" fill="#fff" stroke="#f01818" stroke-width="1.5"/><text x="409.0" y="76.6" font-family="Liberation Serif" font-weight="bold" font-size="6.5" text-anchor="middle" fill="#222">4</text><path d="M410.7 151.3 L392.8 123.3" stroke="#f01818" stroke-width="1.5"/><path d="M390.1 119.1 L395.0 121.9 L390.6 124.7 Z" fill="#f01818"/><ellipse cx="411.6" cy="159.4" rx="10.8" ry="7.2" fill="#fff" stroke="#f01818" stroke-width="1.5"/><text x="411.6" y="161.7" font-family="Liberation Serif" font-weight="bold" font-size="6.5" text-anchor="middle" fill="#222">5</text><path d="M167.5 158.5 L159.9 149.0" stroke="#f01818" stroke-width="1.5"/><path d="M156.8 145.1 L162.0 147.4 L157.9 150.6 Z" fill="#f01818"/><ellipse cx="170.2" cy="165.7" rx="10.5" ry="6.8" fill="#fff" stroke="#f01818" stroke-width="1.5"/><text x="170.2" y="168.0" font-family="Liberation Serif" font-weight="bold" font-size="6.5" text-anchor="middle" fill="#222">6</text><path d="M100.3 160.3 L40.6 113.3" stroke="#f01818" stroke-width="1.5"/><path d="M36.7 110.2 L42.2 111.3 L39.0 115.3 Z" fill="#f01818"/><ellipse cx="109.3" cy="165.7" rx="10.5" ry="6.8" fill="#fff" stroke="#f01818" stroke-width="1.5"/><text x="109.3" y="168.0" font-family="Liberation Serif" font-weight="bold" font-size="6.5" text-anchor="middle" fill="#222">7</text><path d="M423.5 165 V184" stroke="#555" stroke-width="1"/></svg>
<div class="t" style="left:854.60px;top:542.52px;font-size:12.1px;line-height:20px;color:#000;font-family:'Liberation Serif',serif;font-style:italic;">Hình 3-25 Khung webcam và hút sản phẩm</div>
<div class="t" style="left:787.10px;top:565.72px;font-size:12.1px;line-height:20px;color:#000;font-family:'Liberation Serif',serif;">1: Bộ phận trượt truyền đai xi lanh hút sản phẩm</div>
<div class="t" style="left:787.10px;top:586.52px;font-size:12.1px;line-height:20px;color:#000;font-family:'Liberation Serif',serif;">2:Công tắc hành trình</div>
<div class="t" style="left:787.10px;top:607.32px;font-size:12.1px;line-height:20px;color:#000;font-family:'Liberation Serif',serif;">3: Webcam</div>
<div class="t" style="left:787.10px;top:628.12px;font-size:12.1px;line-height:20px;color:#000;font-family:'Liberation Serif',serif;">4:Cảm biến</div>
<div class="t" style="left:787.10px;top:648.92px;font-size:12.1px;line-height:20px;color:#000;font-family:'Liberation Serif',serif;">5: Động cơ bước</div>
<div class="t" style="left:787.10px;top:669.72px;font-size:12.1px;line-height:20px;color:#000;font-family:'Liberation Serif',serif;">6:Gá đỡ thùng</div>
<div class="t" style="left:787.10px;top:690.52px;font-size:12.1px;line-height:20px;color:#000;font-family:'Liberation Serif',serif;">7:Xi lanh đẩy thùng</div>
<div class="t" style="left:760.30px;top:711.62px;font-size:12.1px;line-height:20px;color:#000;font-family:'Liberation Serif',serif;font-weight:bold;">3.4.7.2 Cơ cấu đóng nắp thùng và dán thùng</div>
<svg class="a" style="left:787px;top:739px;" width="10" height="9" viewBox="0 0 10 9"><path d="M0.5 0.5 L9 4.5 L0.5 8.5 L3.5 4.5 Z" fill="#000"/></svg>
<div class="t" style="left:814.20px;top:732.32px;font-size:12.1px;line-height:20px;color:#000;font-family:'Liberation Serif',serif;">Nguyên lý hoạt động:</div>
<div class="t" style="word-spacing:0.453px;left:801.00px;top:753.42px;font-size:12.1px;line-height:20px;color:#000;font-family:'Liberation Serif',serif;">Thùng được đẩy ra băng tải được di chuyển đến vị trí cảm biến, xi lanh khí</div>
<div class="t" style="word-spacing:0.385px;left:773.50px;top:774.52px;font-size:12.1px;line-height:20px;color:#000;font-family:'Liberation Serif',serif;">nén đẩy ra để đóng một bên nắp thùng, băng tải di chuyển tiếp đến bộ phận đóng</div>
<div class="t" style="word-spacing:0.305px;left:773.50px;top:795.52px;font-size:12.1px;line-height:20px;color:#000;font-family:'Liberation Serif',serif;">tất cả nắp thùng, khi đóng hết nắp thùng chuyển sang công đoạn của bộ phận dán</div>
<div class="t" style="word-spacing:0.454px;left:773.50px;top:816.42px;font-size:12.1px;line-height:20px;color:#000;font-family:'Liberation Serif',serif;">thùng, trong lúc dán gần xong xi lanh khí nén sẽ cắt băng keo và được di chuyển</div>
<div class="t" style="left:773.50px;top:837.22px;font-size:12.1px;line-height:20px;color:#000;font-family:'Liberation Serif',serif;">đến cuối băng tải thì xong 1 thùng.</div>
<div class="t" style="left:1131.00px;top:880.42px;font-size:12.1px;line-height:20px;color:#808080;font-family:'Liberation Serif',serif;width:40.00px;text-align:right;">49</div>
<div class="a pg" style="left:1236px;top:231px;width:569px;height:737px"></div>
<div class="a" style="left:1312px;top:269px;width:16px;height:1px;background:#a8a8a8;"></div>
<div class="a" style="left:1327px;top:254px;width:1px;height:16px;background:#a8a8a8;"></div>
<div class="a" style="left:1753px;top:254px;width:1px;height:16px;background:#a8a8a8;"></div>
<div class="a" style="left:1753px;top:269px;width:16px;height:1px;background:#a8a8a8;"></div>
<div class="a" style="left:1312px;top:908px;width:16px;height:1px;background:#a8a8a8;"></div>
<div class="a" style="left:1327px;top:908px;width:1px;height:16px;background:#a8a8a8;"></div>
<div class="a" style="left:1753px;top:908px;width:1px;height:16px;background:#a8a8a8;"></div>
<div class="a" style="left:1753px;top:908px;width:16px;height:1px;background:#a8a8a8;"></div>
<div class="t" style="left:1330.40px;top:286.82px;font-size:11.2px;line-height:20px;color:#6c6c6c;font-family:'Liberation Serif',serif;font-style:italic;">Khóa luận tốt nghiệp</div>
<div class="t" style="left:1502.40px;top:286.82px;font-size:11.2px;line-height:20px;color:#6c6c6c;font-family:'Liberation Serif',serif;font-style:italic;width:250.00px;text-align:right;">GVHD:Ts. Trần Ngọc Đăng Khoa</div>
<div class="t" style="left:1502.40px;top:299.52px;font-size:11.2px;line-height:20px;color:#6c6c6c;font-family:'Liberation Serif',serif;font-style:italic;width:250.00px;text-align:right;">Ths. Hoàng Công Học</div>
<div class="a" style="left:1368.50px;top:344.70px;width:4.4px;height:4.4px;border-radius:50%;background:#000"></div>
<div class="t" style="left:1395.20px;top:336.52px;font-size:12.1px;line-height:20px;color:#000;font-family:'Liberation Serif',serif;">Cấu tạo:</div>
<svg class="a" style="left:1317px;top:357px;" width="435" height="262" viewBox="0 0 435 262"><defs><linearGradient id="bg3" x1="0" y1="0" x2="0" y2="1"><stop offset="0" stop-color="#bfc0c3"/><stop offset="1" stop-color="#e4e5e7"/></linearGradient></defs><rect width="435" height="262" fill="url(#bg3)" stroke="#cfcfcf" stroke-width="1"/><rect x="141.6" y="84.2" width="57.4" height="39.5" fill="#6a6a6a"/><rect x="141.6" y="72.7" width="58.4" height="11.5" fill="#7a7a7a"/><path d="M141.6 77 H200 M141.6 81 H200" stroke="#b0b0b0" stroke-width="0.8"/><path d="M158 118 L172 96 L178 100 L165 122 Z" fill="#8b5a1a"/><path d="M172 96 L186 108 L182 112 L170 101 Z" fill="#8b5a1a"/><rect x="170" y="88" width="2.5" height="42" fill="#9a9a9a"/><circle cx="171" cy="88" r="2" fill="#2020c0"/><circle cx="171" cy="131" r="1.8" fill="#2020c0"/><rect x="153" y="122" width="10" height="26" rx="4.5" fill="#e23030"/><ellipse cx="158.0" cy="146" rx="5.0" ry="3" fill="#b01818"/><rect x="181" y="97" width="9" height="19" rx="4.5" fill="#e23030"/><ellipse cx="185.5" cy="114" rx="4.5" ry="3" fill="#b01818"/><rect x="181" y="122" width="9" height="26" rx="4.5" fill="#e23030"/><ellipse cx="185.5" cy="146" rx="4.5" ry="3" fill="#b01818"/><rect x="190" y="117" width="9" height="24" rx="4.5" fill="#e23030"/><ellipse cx="194.5" cy="139" rx="4.5" ry="3" fill="#b01818"/><rect x="186" y="89" width="10" height="8" fill="#f4f4f4"/><circle cx="189" cy="98.2" r="4.5" fill="#ddd" stroke="#777" stroke-width="1"/><path d="M27.5 160.6 L408.3 168 L408.3 191.6 L25 186.2 Z" fill="#008000"/><path d="M25.5 154.5 L410.8 161 L410.8 168.3 L25.5 160.8 Z" fill="#5a5a5a"/><path d="M25.5 156.3 L410.8 162.8 M25.5 158.8 L410.8 165.5" stroke="#a8a8a8" stroke-width="0.7"/><path d="M25 186.2 L408.3 191.4 L408.3 205.2 L25 201.5 Z" fill="#5c5c5c"/><path d="M25 189.5 L408.3 194.8 M25 193.5 L408.3 198.6 M25 197.5 L408.3 202" stroke="#b8b8b8" stroke-width="0.8"/><rect x="38.3" y="200" width="5.1" height="20.6" fill="#666"/><rect x="385.7" y="205" width="4.9" height="23" fill="#666"/><rect x="23" y="188.8" width="8.1" height="19.1" rx="3" fill="#e8e8e0" stroke="#888" stroke-width="0.6"/><rect x="24" y="181" width="6" height="8" fill="#2a2a2a"/><rect x="22.5" y="155" width="8" height="12" fill="#3a3a3a"/><circle cx="27" cy="162" r="3" fill="#2a3ad0"/><rect x="395" y="160.5" width="14" height="9" fill="#2a2a2a"/><path d="M405 165 A4 4 0 0 1 407.5 173" fill="none" stroke="#2a3ad0" stroke-width="1.6"/><rect x="393" y="196" width="15.6" height="11" fill="#2a2a2a"/><rect x="33.5" y="146" width="4" height="8" fill="#e0a020"/><circle cx="35.5" cy="157" r="1.8" fill="#c03030"/><rect x="136.4" y="66.3" width="5.2" height="123.7" fill="#5c5c5c"/><path d="M137.2 66.3 V190.0" stroke="#9a9a9a" stroke-width="0.8"/><rect x="200.2" y="67.6" width="8.8" height="122.4" fill="#5c5c5c"/><path d="M201.0 67.6 V190.0" stroke="#9a9a9a" stroke-width="0.8"/><path d="M204.6 67.6 V190.0" stroke="#8a8a8a" stroke-width="0.7"/><path d="M208.0 67.6 V190.0" stroke="#454545" stroke-width="0.8"/><rect x="209" y="130" width="27.1" height="20.4" fill="#ffc400"/><rect x="209" y="150.4" width="27.1" height="38.3" fill="#8d5a10"/><path d="M209 137 L266.7 96.9" stroke="#8a8a8a" stroke-width="3.2"/><path d="M209 137.7 L266.7 123.7" stroke="#8a8a8a" stroke-width="3"/><path d="M236 114 L266.7 96.9" stroke="#c8c8c8" stroke-width="0.8"/><rect x="267.5" y="68.8" width="5.1" height="125.0" fill="#5c5c5c"/><path d="M268.3 68.8 V193.8" stroke="#9a9a9a" stroke-width="0.8"/><rect x="266" y="90" width="6.5" height="9" fill="#eee"/><rect x="272.6" y="97.5" width="32.4" height="7" fill="#d8d8d8" stroke="#888" stroke-width="0.6"/><path d="M301.1 114.7 L319 77.8" stroke="#a0a0a0" stroke-width="3"/><circle cx="319" cy="78" r="2" fill="#2020c0"/><circle cx="301" cy="114.5" r="2" fill="#2020c0"/><rect x="265.5" y="135.1" width="12.7" height="7.7" fill="#f0f0f0" stroke="#999" stroke-width="0.5"/><rect x="273" y="150" width="3.5" height="6" fill="#e0a020"/><circle cx="275" cy="159" r="1.8" fill="#c03030"/><path d="M35.7 24.8 L35.7 139.0" stroke="#f01818" stroke-width="1.3"/><path d="M35.7 144.0 L33.1 139.0 L38.3 139.0 Z" fill="#f01818"/><ellipse cx="35.7" cy="12.8" rx="12" ry="12" fill="#fff" stroke="#f01818" stroke-width="1.8"/><text x="35.7" y="15.9" font-family="Liberation Serif" font-weight="bold" font-size="8.5" text-anchor="middle" fill="#222">7</text><path d="M146.6 28.0 L169.9 101.0" stroke="#f01818" stroke-width="1.5"/><path d="M171.4 105.8 L167.4 101.8 L172.4 100.2 Z" fill="#f01818"/><ellipse cx="145.9" cy="14.5" rx="12.5" ry="12.5" fill="#fff" stroke="#f01818" stroke-width="1.8"/><text x="145.9" y="17.6" font-family="Liberation Serif" font-weight="bold" font-size="8.5" text-anchor="middle" fill="#222">6</text><path d="M195.9 25.5 L195.9 69.0" stroke="#f01818" stroke-width="1.5"/><path d="M195.9 74.0 L193.3 69.0 L198.5 69.0 Z" fill="#f01818"/><ellipse cx="198.9" cy="14.0" rx="12.5" ry="12.5" fill="#fff" stroke="#f01818" stroke-width="1.8"/><text x="198.9" y="17.1" font-family="Liberation Serif" font-weight="bold" font-size="8.5" text-anchor="middle" fill="#222">5</text><path d="M268.0 24.2 L234.7 106.4" stroke="#f01818" stroke-width="1.5"/><path d="M232.8 111.0 L232.3 105.4 L237.1 107.3 Z" fill="#f01818"/><ellipse cx="278.2" cy="14.0" rx="12.5" ry="12.5" fill="#fff" stroke="#f01818" stroke-width="1.8"/><text x="278.2" y="17.1" font-family="Liberation Serif" font-weight="bold" font-size="8.5" text-anchor="middle" fill="#222">4</text><path d="M373.0 15.3 L323.6 72.7" stroke="#f01818" stroke-width="1.5"/><path d="M320.3 76.5 L321.6 71.0 L325.5 74.4 Z" fill="#f01818"/><ellipse cx="385.8" cy="13.3" rx="12.5" ry="12.5" fill="#fff" stroke="#f01818" stroke-width="1.8"/><text x="385.8" y="16.4" font-family="Liberation Serif" font-weight="bold" font-size="8.5" text-anchor="middle" fill="#222">3</text><path d="M373.8 54.8 L281.6 152.4" stroke="#f01818" stroke-width="1.5"/><path d="M278.2 156.0 L279.7 150.6 L283.5 154.2 Z" fill="#f01818"/><ellipse cx="387.3" cy="47.2" rx="13" ry="12.5" fill="#fff" stroke="#f01818" stroke-width="1.8"/><text x="387.3" y="50.3" font-family="Liberation Serif" font-weight="bold" font-size="8.5" text-anchor="middle" fill="#222">2</text><path d="M388.5 100.7 L373.1 171.1" stroke="#f01818" stroke-width="1.5"/><path d="M372.0 176.0 L370.5 170.6 L375.6 171.7 Z" fill="#f01818"/><ellipse cx="388.6" cy="87.2" rx="13" ry="12.5" fill="#fff" stroke="#f01818" stroke-width="1.8"/><text x="388.6" y="90.3" font-family="Liberation Serif" font-weight="bold" font-size="8.5" text-anchor="middle" fill="#222">1</text></svg>
<div class="t" style="left:1433.90px;top:620.62px;font-size:12.1px;line-height:20px;color:#000;font-family:'Liberation Serif',serif;font-style:italic;">Hình 3-26 Khung đẩy thùng và dán thùng</div>
<div class="t" style="left:1367.90px;top:643.52px;font-size:12.1px;line-height:20px;color:#000;font-family:'Liberation Serif',serif;">1: Băng tải</div>
<div class="t" style="left:1367.90px;top:664.32px;font-size:12.1px;line-height:20px;color:#000;font-family:'Liberation Serif',serif;">2:Cảm biến</div>
<div class="t" style="left:1367.90px;top:685.12px;font-size:12.1px;line-height:20px;color:#000;font-family:'Liberation Serif',serif;">3: Xi lanh đẩy thùng</div>
<div class="t" style="left:1367.90px;top:705.92px;font-size:12.1px;line-height:20px;color:#000;font-family:'Liberation Serif',serif;">4: khung đóng nắp thùng</div>
<div class="t" style="left:1532.70px;top:643.52px;font-size:12.1px;line-height:20px;color:#000;font-family:'Liberation Serif',serif;">5: Khung dán băng keo</div>
<div class="t" style="left:1532.70px;top:664.32px;font-size:12.1px;line-height:20px;color:#000;font-family:'Liberation Serif',serif;">6: Xi lanh cắt băng keo</div>
<div class="t" style="left:1537.00px;top:685.12px;font-size:12.1px;line-height:20px;color:#000;font-family:'Liberation Serif',serif;">7: Vị trí dừng thùng</div>
<div class="t" style="left:1712.00px;top:880.42px;font-size:12.1px;line-height:20px;color:#808080;font-family:'Liberation Serif',serif;width:40.00px;text-align:right;">50</div>
<div class="a" style="left:0px;top:0px;width:1907px;height:74px;background:#f0f0f0;"></div>
<svg class="a" style="left:0px;top:0px;" width="30" height="40" viewBox="0 0 30 40"><rect x="7.2" y="12" width="12.8" height="15.8" rx="1.2" fill="#185abd"/><rect x="7.2" y="12" width="12.8" height="4" rx="1" fill="#41a5ee"/><rect x="7.2" y="15.9" width="12.8" height="4" fill="#2b7cd3"/><rect x="7.2" y="19.8" width="12.8" height="4" fill="#185abd"/><rect x="7.2" y="23.7" width="12.8" height="4.1" rx="1" fill="#103f91"/><rect x="4.6" y="15.6" width="10.4" height="10.3" rx="1" fill="#0d2a66" opacity="0.8"/><rect x="4" y="14.9" width="10.4" height="10.3" rx="1" fill="#1a5ac4"/><path d="M5.4 17.2 L7.1 23 L9.1 18.3 L11.1 23 L12.8 17.2" fill="none" stroke="#fff" stroke-width="1.5" stroke-linejoin="round"/></svg>
<div class="t" style="letter-spacing:-0.009px;left:36.10px;top:10.32px;font-size:11.5px;line-height:20px;color:#acacac;">AutoSave</div>
<div class="a" style="left:93.2px;top:9.2px;width:44.4px;height:19.4px;background:#fafafa;border:1px solid #a8a8a8;border-radius:10px;box-sizing:border-box"></div>
<svg class="a" style="left:95px;top:11px;" width="16" height="16" viewBox="0 0 16 16"><circle cx="8" cy="7.9" r="6.8" fill="#b4b4b4"/></svg>
<div class="t" style="letter-spacing:0.020px;left:116.00px;top:10.32px;font-size:11.5px;line-height:20px;color:#acacac;">Off</div>
<svg class="a" style="left:148px;top:9px;" width="24" height="24" viewBox="0 0 24 24"><path d="M3.6 3.5 H18.3 V18.2 H6 L3.6 15.8 Z" fill="none" stroke="#b4b4b4" stroke-width="1.1"/><path d="M6.5 3.5 V9.5 H14.5 V3.5" fill="none" stroke="#b4b4b4" stroke-width="1.1"/><path d="M7.3 18.2 V13.8 H14.3 V18.2" fill="none" stroke="#b4b4b4" stroke-width="1.1"/></svg>
<svg class="a" style="left:176px;top:9px;" width="40" height="24" viewBox="0 0 40 24"><path d="M5.5 3 V9.5 H12" fill="none" stroke="#b4b4b4" stroke-width="1.1"/><path d="M5.8 9.2 C8 4.5 13 2 16.5 4.5 C19.5 7 19 10.5 16.5 13 L10.3 18.7" fill="none" stroke="#b4b4b4" stroke-width="1.1"/><path d="M25.7 9.15 L28.4 11.85 L31.099999999999998 9.15" fill="none" stroke="#b4b4b4" stroke-width="1"/></svg>
<svg class="a" style="left:214px;top:9px;" width="30" height="24" viewBox="0 0 30 24"><path d="M5 3 H10.5 V8.8" fill="none" stroke="#b4b4b4" stroke-width="1.1"/><path d="M9.8 3.6 A7.8 7.8 0 1 0 15.5 4.7" fill="none" stroke="#b4b4b4" stroke-width="1.1"/></svg>
<svg class="a" style="left:248px;top:9px;" width="16" height="24" viewBox="0 0 16 24"><path d="M4 8.5 H11" stroke="#b4b4b4" stroke-width="1.1"/><path d="M4.5 10.5 L7.5 13.5 L10.5 10.5" fill="none" stroke="#b4b4b4" stroke-width="1.1"/></svg>
<div class="t" style="letter-spacing:-0.018px;left:285.20px;top:10.82px;font-size:11.5px;line-height:20px;color:#acacac;">Bao Cao Phan Loại Dán Thùng.docx  •  Saved to this PC</div>
<svg class="a" style="left:576px;top:9px;" width="16" height="24" viewBox="0 0 16 24"><path d="M3.3499999999999996 9.375 L7.6 13.625 L11.85 9.375" fill="none" stroke="#acacac" stroke-width="1.1"/></svg>
<div class="a" style="left:722px;top:4px;width:468px;height:33px;background:#f0f0f0;border:1px solid #d2d2d2;border-bottom:2px solid #cdcdcd;border-radius:5px;box-sizing:border-box"></div>
<svg class="a" style="left:740px;top:9px;" width="22" height="22" viewBox="0 0 22 22"><circle cx="11.8" cy="8.8" r="4.6" fill="none" stroke="#a0a0a0" stroke-width="1.1"/><path d="M8.5 12.2 L3.2 17.6" stroke="#a0a0a0" stroke-width="1.2"/></svg>
<div class="t" style="letter-spacing:0.028px;left:771.30px;top:10.84px;font-size:12px;line-height:20px;color:#a0a0a0;">Search</div>
<div class="a" style="left:1650px;top:10px;width:58px;height:18.7px;background:#bdbdbd;border-radius:2px"></div>
<div class="t" style="letter-spacing:0.075px;left:1660.90px;top:10.72px;font-size:11.5px;line-height:20px;color:#fafafa;">Sign in</div>
<svg class="a" style="left:1728px;top:8px;" width="26" height="24" viewBox="0 0 26 24"><path d="M5.2 18 L14 5.8 L19.5 11.2 L7.5 20.2 Z" fill="none" stroke="#b4b4b4" stroke-width="1.1" stroke-linejoin="round"/><path d="M9 18.2 A2.2 2.2 0 0 0 12.6 16" fill="none" stroke="#b4b4b4" stroke-width="1.1"/><path d="M16.4 4 L16.9 6.6 M18.3 7.8 L20.6 5.4 M19.2 9.8 L21.2 9.5" stroke="#b4b4b4" stroke-width="1.1"/></svg>
<div class="a" style="left:1783px;top:19px;width:10px;height:1px;background:#b4b4b4;"></div>
<svg class="a" style="left:1826px;top:10px;" width="20" height="20" viewBox="0 0 20 20"><rect x="5" y="7.3" width="7.2" height="7.3" rx="1" fill="none" stroke="#b4b4b4" stroke-width="1"/><path d="M7 5.6 V5.2 Q7 5.1 7.5 5.1 H13.3 Q14.6 5.1 14.6 6.4 V12.3" fill="none" stroke="#b4b4b4" stroke-width="1"/></svg>
<svg class="a" style="left:1874px;top:10px;" width="20" height="20" viewBox="0 0 20 20"><path d="M5 5 L14.8 14.8 M14.8 5 L5 14.8" stroke="#b4b4b4" stroke-width="1"/></svg>
<div class="t" style="letter-spacing:-0.474px;left:10.20px;top:49.83px;font-size:12.6px;line-height:20px;color:#262626;">File</div>
<div class="t" style="letter-spacing:0.702px;left:55.70px;top:49.83px;font-size:12.6px;line-height:20px;color:#1a1a1a;-webkit-text-stroke:0.35px #1a1a1a;">Home</div>
<div class="t" style="letter-spacing:0.083px;left:112.00px;top:49.83px;font-size:12.6px;line-height:20px;color:#262626;">Insert</div>
<div class="t" style="letter-spacing:0.102px;left:165.20px;top:49.83px;font-size:12.6px;line-height:20px;color:#262626;">Draw</div>
<div class="t" style="letter-spacing:0.016px;left:215.20px;top:49.83px;font-size:12.6px;line-height:20px;color:#262626;">Design</div>
<div class="t" style="letter-spacing:0.031px;left:276.00px;top:49.83px;font-size:12.6px;line-height:20px;color:#262626;">Layout</div>
<div class="t" style="letter-spacing:-0.081px;left:335.00px;top:49.83px;font-size:12.6px;line-height:20px;color:#262626;">References</div>
<div class="t" style="letter-spacing:0.300px;left:419.00px;top:49.83px;font-size:12.6px;line-height:20px;color:#262626;">Mailings</div>
<div class="t" style="letter-spacing:-0.216px;left:489.00px;top:49.83px;font-size:12.6px;line-height:20px;color:#262626;">Review</div>
<div class="t" style="letter-spacing:-0.020px;left:549.00px;top:49.83px;font-size:12.6px;line-height:20px;color:#262626;">View</div>
<div class="t" style="letter-spacing:0.023px;left:596.00px;top:49.83px;font-size:12.6px;line-height:20px;color:#262626;">Help</div>
<div class="a" style="left:55px;top:69px;width:38px;height:2px;background:#0e3f9f;border-radius:1px"></div>
<div class="a" style="left:1619px;top:47px;width:95.6px;height:23.5px;background:#fff;border:1px solid #8d8d8d;border-radius:4px;box-sizing:border-box"></div>
<svg class="a" style="left:1625px;top:50px;" width="18" height="18" viewBox="0 0 18 18"><path d="M2.6 3 H13.6 V10.5 H6.5 L4 13 V10.5 H2.6 Z" fill="none" stroke="#333" stroke-width="1.1" stroke-linejoin="round"/></svg>
<div class="t" style="letter-spacing:-0.011px;left:1643.50px;top:50.23px;font-size:12.6px;line-height:20px;color:#1f1f1f;">Comments</div>
<div class="a" style="left:1723px;top:47px;width:85px;height:23.5px;background:#fff;border:1px solid #8d8d8d;border-radius:4px;box-sizing:border-box"></div>
<svg class="a" style="left:1726px;top:49px;" width="20" height="20" viewBox="0 0 20 20"><path d="M3.6 16.5 L4.5 12.6 L13.5 3.6 Q14.5 2.7 15.6 3.8 L16 4.2 Q17 5.3 16.1 6.2 L7.1 15.3 Z M12.3 4.9 L14.9 7.5" fill="none" stroke="#333" stroke-width="1.1" stroke-linejoin="round"/></svg>
<div class="t" style="letter-spacing:0.098px;left:1747.30px;top:50.23px;font-size:12.6px;line-height:20px;color:#1f1f1f;">Editing</div>
<svg class="a" style="left:1787px;top:50px;" width="16" height="16" viewBox="0 0 16 16"><path d="M5.0 6.3 L8 9.3 L11.0 6.3" fill="none" stroke="#333" stroke-width="1.1"/></svg>
<div class="a" style="left:1816px;top:47px;width:80px;height:23.5px;background:#185abd;border-radius:4px"></div>
<svg class="a" style="left:1820px;top:50px;" width="20" height="20" viewBox="0 0 20 20"><path d="M8.3 6.5 H4.5 V15.5 H14.3 V12.8" fill="none" stroke="#fff" stroke-width="1.1"/><path d="M7.6 12.6 Q8.2 8.2 12.8 8.2 V10.6 L16 7.1 L12.8 3.8 V6.2 Q7.6 6.6 7.6 12.6 Z" fill="none" stroke="#fff" stroke-width="1" stroke-linejoin="round"/></svg>
<div class="t" style="letter-spacing:-0.282px;left:1840.30px;top:50.23px;font-size:12.6px;line-height:20px;color:#ffffff;">Share</div>
<svg class="a" style="left:1880px;top:50px;" width="16" height="16" viewBox="0 0 16 16"><path d="M4.75 7.375 L8 10.625 L11.25 7.375" fill="none" stroke="#fff" stroke-width="1.3"/></svg>
<div class="a" style="left:-8px;top:74px;width:1908px;height:100px;background:#fff;border-radius:8px;box-shadow:0 2px 4px rgba(0,0,0,0.13),0 0 1px rgba(0,0,0,0.10)"></div>
<svg class="a" style="left:0px;top:0px;" width="1907" height="180" viewBox="0 0 1907 180"><path d="M170.5 79 V168" stroke="#e0e0e0" stroke-width="1"/><path d="M534.5 79 V168" stroke="#e0e0e0" stroke-width="1"/><path d="M830.5 79 V168" stroke="#e0e0e0" stroke-width="1"/><path d="M1624.5 79 V168" stroke="#e0e0e0" stroke-width="1"/><path d="M1715.5 79 V168" stroke="#e0e0e0" stroke-width="1"/><path d="M1773.5 79 V168" stroke="#e0e0e0" stroke-width="1"/><path d="M403.5 86 V110" stroke="#e0e0e0" stroke-width="1"/><path d="M448.5 86 V110" stroke="#e0e0e0" stroke-width="1"/><path d="M350.5 118 V142" stroke="#e0e0e0" stroke-width="1"/><path d="M667.5 86 V110" stroke="#e0e0e0" stroke-width="1"/><path d="M722.5 86 V110" stroke="#e0e0e0" stroke-width="1"/><path d="M767.5 86 V110" stroke="#e0e0e0" stroke-width="1"/><path d="M796.5 86 V110" stroke="#e0e0e0" stroke-width="1"/><path d="M673.5 118 V142" stroke="#e0e0e0" stroke-width="1"/><path d="M718.5 118 V142" stroke="#e0e0e0" stroke-width="1"/><path d="M159.5 168 V160.5 H167" fill="none" stroke="#555" stroke-width="1"/><path d="M161.5 162.5 L166 167 M166 163.5 V167 H162.5" fill="none" stroke="#555" stroke-width="1"/><path d="M523.5 168 V160.5 H531" fill="none" stroke="#555" stroke-width="1"/><path d="M525.5 162.5 L530 167 M530 163.5 V167 H526.5" fill="none" stroke="#555" stroke-width="1"/><path d="M819.5 168 V160.5 H827" fill="none" stroke="#555" stroke-width="1"/><path d="M821.5 162.5 L826 167 M826 163.5 V167 H822.5" fill="none" stroke="#555" stroke-width="1"/><path d="M1613.5 168 V160.5 H1621" fill="none" stroke="#555" stroke-width="1"/><path d="M1615.5 162.5 L1620 167 M1620 163.5 V167 H1616.5" fill="none" stroke="#555" stroke-width="1"/><rect x="18.4" y="87.5" width="20" height="22.8" fill="#fdf3e3" stroke="#e8820c" stroke-width="1.1"/><path d="M22.5 89.5 V86.8 H26 Q27 83.5 28.5 83.5 Q30 83.5 31 86.8 H34.5 V89.5 Z" fill="#fff" stroke="#555" stroke-width="1"/><rect x="31.5" y="95.3" width="13" height="17" fill="#fff" stroke="#333" stroke-width="1.1"/><path d="M25.55 139.025 L28.3 141.775 L31.05 139.025" fill="none" stroke="#333" stroke-width="1.1"/><path d="M60.5 82.5 L65.5 93 M67.5 82.5 L62.5 93" stroke="#b4b4b4" stroke-width="1"/><circle cx="61.3" cy="95.5" r="1.8" fill="none" stroke="#b4b4b4"/><circle cx="66.8" cy="95.5" r="1.8" fill="none" stroke="#b4b4b4"/><path d="M62.5 110 V108.5 H56.5 V121.5 H59.5" fill="none" stroke="#b4b4b4" stroke-width="1"/><path d="M59.5 111.5 H67 L71 115.5 V123.5 H59.5 Z" fill="none" stroke="#b4b4b4" stroke-width="1"/><path d="M62 118.5 H68.5 M62 121 H68.5" stroke="#b4b4b4"/><path d="M57 140.8 L63.5 136.5 L68 143 L63.5 148.8 Z" fill="#f6c08a" stroke="#e8740c" stroke-width="1.2" stroke-linejoin="round"/><path d="M64 137 L69.5 131.5 L72.5 134.5 L67 140" fill="#fff" stroke="#333" stroke-width="1.1"/><path d="M69.5 134.5 L71.5 136.5" stroke="#333"/><rect x="179.8" y="86.8" width="123.2" height="22.1" rx="4" fill="#fff" stroke="#8a8a8a" stroke-width="1"/><rect x="306.9" y="86.8" width="41.1" height="22.1" rx="4" fill="#fff" stroke="#8a8a8a" stroke-width="1"/><path d="M294.25 97.125 L297 99.875 L299.75 97.125" fill="none" stroke="#333" stroke-width="1.1"/><path d="M339.75 97.125 L342.5 99.875 L345.25 97.125" fill="none" stroke="#333" stroke-width="1.1"/><path d="M356 102.8 L361.5 90.2 L367 102.8 M358.09 98.012 H364.91" fill="none" stroke="#333" stroke-width="1.1" stroke-linejoin="miter"/><path d="M366.3 94 L368.6 91.6 L370.9 94" fill="none" stroke="#1a86d0" stroke-width="1.1"/><path d="M383.7 102.8 L388.1 93.2 L392.5 102.8 M385.372 99.152 H390.82800000000003" fill="none" stroke="#333" stroke-width="1.1" stroke-linejoin="miter"/><path d="M392.3 91.2 L394.6 93.6 L396.9 91.2" fill="none" stroke="#1a86d0" stroke-width="1.1"/><path d="M410.5 102.8 L414.65 93.2 L418.8 102.8 M412.077 99.152 H417.223" fill="none" stroke="#333" stroke-width="1.1" stroke-linejoin="miter"/><path d="M431.75 97.625 L434.5 100.375 L437.25 97.625" fill="none" stroke="#333" stroke-width="1.1"/><path d="M455.2 102.8 L459.2 90.2 L463.2 102.8 M456.71999999999997 98.012 H461.68" fill="none" stroke="#333" stroke-width="1.1" stroke-linejoin="miter"/><path d="M461.5 101.5 L466.8 96.3 L471 100.5 L465.7 105.7 Z" fill="#fff" stroke="#9b4fc2" stroke-width="1.2" stroke-linejoin="round"/><path d="M463.6 99.5 L467.8 103.5" stroke="#9b4fc2" stroke-width="1"/><text x="480.5" y="97" font-family="Liberation Sans" font-size="6.6" fill="#777">abc</text><path d="M489.3 106 L495.3 95.6 L496.6 106 M491.3 102.3 H496.2" fill="none" stroke="#1a86d0" stroke-width="1.2"/><rect x="507.6" y="90.6" width="15.3" height="15" fill="none" stroke="#333" stroke-width="1.2"/><path d="M511.3 102.8 L515.3 93.5 L519.3 102.8 M512.8199999999999 99.26599999999999 H517.78" fill="none" stroke="#333" stroke-width="1.1" stroke-linejoin="miter"/><path d="M215.5 124.4 H220.2 M213.4 134 H218 M218.7 124.4 L215 134" fill="none" stroke="#333" stroke-width="1.15"/><path d="M238.4 124.2 V130.3 Q238.4 133.6 242 133.6 Q245.6 133.6 245.6 130.3 V124.2" fill="none" stroke="#333" stroke-width="1.15"/><path d="M237.8 135.8 H246.8" stroke="#333" stroke-width="1.2"/><path d="M258.25 128.625 L261 131.375 L263.75 128.625" fill="none" stroke="#333" stroke-width="1.1"/><path d="M275.8 130.6 H292" stroke="#333" stroke-width="1.1"/><path d="M357.6 136.6 L362.6 122.4 H367.4 L372.4 136.6 H368.8 L367.7 133.1 H362.3 L361.2 136.6 Z M363.1 130.2 H366.9 L365 124.6 Z" fill="#ffffff" fill-rule="evenodd" stroke="#1f6fd0" stroke-width="1.5" stroke-linejoin="round"/><path d="M378.55 128.525 L381.3 131.275 L384.05 128.525" fill="none" stroke="#333" stroke-width="1.1"/><path d="M401.5 132.5 L403.8 128.5 L410.5 122 Q412.3 120.8 413.5 122.3 Q414.5 123.6 413.2 125 L406.3 131.6 Z" fill="#fff" stroke="#444" stroke-width="1"/><path d="M401.5 132.5 L404.5 130.5 L403.8 128.5 Z" fill="#666"/><rect x="399" y="134" width="16.2" height="4" fill="#ffff00"/><path d="M422.85 128.525 L425.6 131.275 L428.35 128.525" fill="none" stroke="#333" stroke-width="1.1"/><path d="M443.6 132.6 L448.3 122.2 L453 132.6 M445.386 128.648 H451.214" fill="none" stroke="#333" stroke-width="1.1" stroke-linejoin="miter"/><rect x="440" y="134" width="16.1" height="4" fill="#ff0000"/><path d="M464.05 128.525 L466.8 131.275 L469.55 128.525" fill="none" stroke="#333" stroke-width="1.1"/><rect x="481" y="122" width="16" height="16" fill="#c8c8c8"/><path d="M485 135.2 L489.15 125 L493.3 135.2 M486.577 131.32399999999998 H491.723" fill="none" stroke="#333" stroke-width="1.1" stroke-linejoin="miter"/><circle cx="515.2" cy="129.8" r="7.6" fill="none" stroke="#333" stroke-width="1.1"/><path d="M515.2 124.6 V125.6 M511 127.5 V126.3 H519.4 V127.5 M512.5 128.4 H518 L515.2 130.5 V135 L513.8 134.5 M510.6 131.4 H519.8" fill="none" stroke="#333" stroke-width="0.9"/><rect x="547" y="90.4" width="3" height="2.8" fill="#1a86d0"/><path d="M552.2 91.7 H562" stroke="#333" stroke-width="1"/><rect x="547" y="96.3" width="3" height="2.8" fill="#1a86d0"/><path d="M552.2 97.6 H562" stroke="#333" stroke-width="1"/><rect x="547" y="102.2" width="3" height="2.8" fill="#1a86d0"/><path d="M552.2 103.5 H562" stroke="#333" stroke-width="1"/><text x="587.7" y="94.0" font-family="Liberation Sans" font-weight="bold" font-size="5.2" fill="#1a86d0">1</text><path d="M593.2 91.7 H603" stroke="#333" stroke-width="1"/><text x="587.7" y="99.89999999999999" font-family="Liberation Sans" font-weight="bold" font-size="5.2" fill="#1a86d0">2</text><path d="M593.2 97.6 H603" stroke="#333" stroke-width="1"/><text x="587.7" y="105.8" font-family="Liberation Sans" font-weight="bold" font-size="5.2" fill="#1a86d0">3</text><path d="M593.2 103.5 H603" stroke="#333" stroke-width="1"/><text x="628.7" y="94.0" font-family="Liberation Sans" font-weight="bold" font-size="5.2" fill="#1a86d0">1</text><path d="M634.2 91.7 H644" stroke="#333" stroke-width="1"/><text x="630.9000000000001" y="99.89999999999999" font-family="Liberation Sans" font-weight="bold" font-size="5.2" fill="#1a86d0">a</text><path d="M636.1800000000001 97.6 H644" stroke="#333" stroke-width="1"/><text x="635.2" y="105.8" font-family="Liberation Sans" font-weight="bold" font-size="5.2" fill="#1a86d0">i</text><path d="M640.0500000000001 103.5 H644" stroke="#333" stroke-width="1"/><path d="M570.75 96.925 L573.5 99.675 L576.25 96.925" fill="none" stroke="#333" stroke-width="1.1"/><path d="M611.75 96.925 L614.5 99.675 L617.25 96.925" fill="none" stroke="#333" stroke-width="1.1"/><path d="M650.95 96.925 L653.7 99.675 L656.45 96.925" fill="none" stroke="#333" stroke-width="1.1"/><path d="M675 91.3 H689 M683 95.5 H689 M683 99.5 H689 M675 103.5 H689" stroke="#333" stroke-width="1"/><path d="M681 97.4 H675.5 M677.8 95 L675.5 97.4 L677.8 99.8" fill="none" stroke="#1a86d0" stroke-width="1.1"/><path d="M701 91.3 H715 M709 95.5 H715 M709 99.5 H715 M701 103.5 H715" stroke="#333" stroke-width="1"/><path d="M701 97.4 H706.5 M704.2 95 L706.5 97.4 L704.2 99.8" fill="none" stroke="#1a86d0" stroke-width="1.1"/><path d="M729.5 104.8 L736.9 96.3 L744.3 104.8 M732.83 100.975 H740.9699999999999" fill="none" stroke="#333" stroke-width="1.2" stroke-linejoin="miter"/><path d="M729.5 93.3 H734.5 M731.5 91.3 L729.5 93.3 L731.5 95.3 M740 93.3 H745 M743 91.3 L745 93.3 L743 95.3" fill="none" stroke="#1a86d0" stroke-width="1.1"/><path d="M750.75 96.925 L753.5 99.675 L756.25 96.925" fill="none" stroke="#333" stroke-width="1.1"/><path d="M774.3 97 L777.7 90 L781 97 M775.5 94.8 H780" fill="none" stroke="#1a86d0" stroke-width="1.2"/><path d="M774.6 99.2 H780.6 L774.6 105.3 H780.8" fill="none" stroke="#333" stroke-width="1.1"/><path d="M786.6 90 V105.3 M783.4 102 L786.6 105.3 L789.8 102" fill="none" stroke="#333" stroke-width="1.1"/><path d="M811.5 92.5 V104 M814.5 92.5 V104 M816 92.5 H810.5 Q806.3 92.5 806.3 95.5 Q806.3 98.3 810.5 98.3 H811.5" fill="none" stroke="#333" stroke-width="1.1"/><path d="M811.5 92.8 Q806.8 92.8 806.8 95.5 Q806.8 98 811.5 98 Z" fill="#333"/><rect x="543.8" y="118.8" width="22.4" height="22.4" rx="3.5" fill="#efefef" stroke="#6e6e6e" stroke-width="1"/><path d="M548 123.4 H562" stroke="#333" stroke-width="1"/><path d="M548 127.5 H557.6" stroke="#333" stroke-width="1"/><path d="M548 131.5 H562" stroke="#333" stroke-width="1"/><path d="M548 135.4 H557.6" stroke="#333" stroke-width="1"/><path d="M574 123.4 H588" stroke="#333" stroke-width="1"/><path d="M576 127.5 H586" stroke="#333" stroke-width="1"/><path d="M574 131.5 H588" stroke="#333" stroke-width="1"/><path d="M576 135.4 H586" stroke="#333" stroke-width="1"/><path d="M600 123.4 H614" stroke="#333" stroke-width="1"/><path d="M604 127.5 H614" stroke="#333" stroke-width="1"/><path d="M600 131.5 H614" stroke="#333" stroke-width="1"/><path d="M604 135.4 H614" stroke="#333" stroke-width="1"/><path d="M626 123.4 H640" stroke="#333" stroke-width="1"/><path d="M626 127.5 H640" stroke="#333" stroke-width="1"/><path d="M626 131.5 H640" stroke="#333" stroke-width="1"/><path d="M626 135.4 H640" stroke="#333" stroke-width="1"/><path d="M651.6 122 V138 M666.5 122 V138" stroke="#1a86d0" stroke-width="1.1"/><path d="M653.5 124.8 H664.5 M655.5 122.8 L653.5 124.8 L655.5 126.8 M662.5 122.8 L664.5 124.8 L662.5 126.8" fill="none" stroke="#1a86d0" stroke-width="1.1"/><path d="M653.5 128.5 H664.8 M653.5 132.5 H664.8 M653.5 136.5 H664.8" stroke="#333" stroke-width="1"/><path d="M683.4 124 V137 M681.3 126 L683.4 123.8 L685.5 126 M681.3 135 L683.4 137.2 L685.5 135" fill="none" stroke="#1a86d0" stroke-width="1.1"/><path d="M687.3 123.4 H696 M687.3 127.5 H696 M687.3 131.5 H696 M687.3 135.4 H696" stroke="#333" stroke-width="1"/><path d="M701.75 128.825 L704.5 131.575 L707.25 128.825" fill="none" stroke="#333" stroke-width="1.1"/><path d="M728 128.5 L732.5 124.5 V122.8 Q733.5 121.5 734.5 122.8 V126.3 L737.3 128.8 L732.2 133.5 Z" fill="none" stroke="#333" stroke-width="1"/><path d="M736.6 125.5 Q739.3 125.3 739.3 129.5 V132" fill="none" stroke="#1a5fc0" stroke-width="1.3"/><rect x="725.6" y="134.2" width="15" height="3.3" fill="none" stroke="#999" stroke-width="1"/><path d="M748.55 128.825 L751.3 131.575 L754.05 128.825" fill="none" stroke="#333" stroke-width="1.1"/><rect x="766.5" y="122.3" width="14.5" height="13" fill="none" stroke="#333" stroke-width="0.9" stroke-dasharray="1,1.1"/><path d="M773.7 122.3 V135.3 M766.5 128.8 H781" stroke="#333" stroke-width="0.9" stroke-dasharray="1,1.1"/><path d="M766 136.8 H781.3" stroke="#111" stroke-width="1.2"/><path d="M789.55 128.825 L792.3 131.575 L795.05 128.825" fill="none" stroke="#333" stroke-width="1.1"/><rect x="840.8" y="86.5" width="772.2" height="58.5" rx="3" fill="#fff" stroke="#d4d4d4" stroke-width="1"/><rect x="842.6" y="88.6" width="106.6" height="54.6" fill="#fff" stroke="#5a5a5a" stroke-width="1.2"/><rect x="844.5" y="90.5" width="102.8" height="50.8" fill="none" stroke="#e6e6e6" stroke-width="2.4"/><path d="M1600 86.5 V145 M1600 107 H1613 M1600 126.5 H1613" stroke="#d4d4d4" stroke-width="1"/><path d="M1604 98.2 L1606.5 95.8 L1609 98.2" fill="none" stroke="#bbb" stroke-width="1"/><path d="M1604.0 115.75 L1606.5 118.25 L1609.0 115.75" fill="none" stroke="#444" stroke-width="1.1"/><path d="M1604 131.7 H1609" stroke="#444" stroke-width="1"/><path d="M1604.0 134.75 L1606.5 137.25 L1609.0 134.75" fill="none" stroke="#444" stroke-width="1.1"/><circle cx="1647.6" cy="87.4" r="4.8" fill="none" stroke="#333" stroke-width="1.1"/><path d="M1644.3 90.8 L1638.3 96.8" stroke="#333" stroke-width="1.2"/><path d="M1692.45 88.825 L1695.2 91.575 L1697.95 88.825" fill="none" stroke="#333" stroke-width="1.1"/><text x="1642.6" y="116.2" font-family="Liberation Sans" font-size="10.5" fill="#a33fbf">b</text><text x="1646.6" y="124.2" font-family="Liberation Sans" font-size="10.5" fill="#1a86d0">c</text><path d="M1639.6 113.3 Q1637 116.3 1638.6 118.9 Q1639.9 120.7 1644.4 120.7 M1641.9 118.1 L1644.5 120.7 L1641.9 123.3" fill="none" stroke="#1a86d0" stroke-width="1.15"/><path d="M1639.3 135 L1639.3 148.6 L1642.5 145.3 L1645 150.3 L1646.8 149.4 L1644.5 144.6 L1649 144.3 Z" fill="#fff" stroke="#333" stroke-width="1" stroke-linejoin="round"/><path d="M1691.65 141.225 L1694.4 143.975 L1697.15 141.225" fill="none" stroke="#333" stroke-width="1.1"/><path d="M1746 92.4 H1757.5 M1741 99.5 H1752.5 M1736 106.5 H1747.5" stroke="#1c5cc4" stroke-width="4.6" stroke-linecap="round"/><path d="M1748.9 82 L1753.1 85.1 L1734.4 110.3 L1730.2 107.1 Z" fill="#fafafa" stroke="#185abd" stroke-width="1.2" stroke-linejoin="round"/><path d="M1748.9 82 L1753.1 85.1 L1751.4 87.4 L1747.2 84.3 Z" fill="#185abd" stroke="#185abd" stroke-width="0.8"/><path d="M1730.2 107.1 L1734.4 110.3 L1729.9 112.3 Z" fill="#185abd" stroke="#185abd" stroke-width="0.8" stroke-linejoin="round"/><path d="M1880.6 158.1 L1885.6 163.1 L1890.6 158.1" fill="none" stroke="#333" stroke-width="1.1"/></svg>
<div class="t" style="letter-spacing:-0.637px;left:15.60px;top:115.44px;font-size:12px;line-height:20px;color:#262626;">Paste</div>
<div class="t" style="letter-spacing:-0.229px;left:76.60px;top:81.24px;font-size:12px;line-height:20px;color:#b0b0b0;">Cut</div>
<div class="t" style="letter-spacing:-0.179px;left:76.60px;top:106.94px;font-size:12px;line-height:20px;color:#b0b0b0;">Copy</div>
<div class="t" style="letter-spacing:-0.140px;left:76.60px;top:133.34px;font-size:12px;line-height:20px;color:#262626;">Format Painter</div>
<div class="t" style="letter-spacing:0.323px;left:52.70px;top:154.39px;font-size:11px;line-height:20px;color:#262626;">Clipboard</div>
<div class="t" style="letter-spacing:-0.172px;left:182.60px;top:88.14px;font-size:12px;line-height:20px;color:#1f1f1f;">Times New Roman</div>
<div class="t" style="letter-spacing:-0.480px;left:310.20px;top:88.14px;font-size:12px;line-height:20px;color:#1f1f1f;">14</div>
<div class="t" style="left:420.30px;top:88.67px;font-size:12.2px;line-height:20px;color:#333;">a</div>
<div class="t" style="left:187.60px;top:119.35px;font-size:14px;line-height:20px;color:#333;font-weight:bold;">B</div>
<div class="t" style="left:277.00px;top:120.17px;font-size:12.5px;line-height:20px;color:#333;">ab</div>
<div class="t" style="left:306.30px;top:119.72px;font-size:13.5px;line-height:20px;color:#333;font-weight:bold;">x</div>
<div class="t" style="left:313.80px;top:125.40px;font-size:7.5px;line-height:20px;color:#1a86d0;font-weight:bold;">2</div>
<div class="t" style="left:332.30px;top:119.72px;font-size:13.5px;line-height:20px;color:#333;font-weight:bold;">x</div>
<div class="t" style="left:339.80px;top:114.20px;font-size:7.5px;line-height:20px;color:#1a86d0;font-weight:bold;">2</div>
<div class="t" style="letter-spacing:0.396px;left:333.20px;top:154.39px;font-size:11px;line-height:20px;color:#262626;">Font</div>
<div class="t" style="letter-spacing:0.114px;left:648.10px;top:154.39px;font-size:11px;line-height:20px;color:#262626;">Paragraph</div>
<div class="t" style="letter-spacing:-0.002px;left:869.80px;top:101.80px;font-size:16.9px;line-height:27px;color:#111;font-family:'Liberation Serif',serif;">Normal</div>
<div class="t" style="letter-spacing:0.017px;left:968.70px;top:103.13px;font-size:16.8px;line-height:26px;color:#111;font-family:'Liberation Serif',serif;">Body Text</div>
<div class="t" style="letter-spacing:0.008px;left:1078.30px;top:107.00px;font-size:13px;line-height:20px;color:#111;">No Spacing</div>
<div class="t" style="letter-spacing:0.033px;left:1172.60px;top:99.85px;font-size:20.6px;line-height:32px;color:#111;font-family:'Liberation Serif',serif;font-weight:bold;">CHƯƠNG</div>
<div class="t" style="letter-spacing:0.012px;left:1293.90px;top:105.84px;font-size:14.9px;line-height:20px;color:#3a7cc0;">Heading 2</div>
<div class="t" style="letter-spacing:0.967px;left:1405.40px;top:93.10px;font-size:30px;line-height:48px;color:#4a5566;">Title</div>
<div class="t" style="letter-spacing:-0.002px;left:1499.30px;top:103.03px;font-size:15.8px;line-height:25px;color:#262626;">Subtitle,hình</div>
<div class="t" style="letter-spacing:-0.295px;left:1205.30px;top:154.39px;font-size:11px;line-height:20px;color:#262626;">Styles</div>
<div class="t" style="letter-spacing:-0.336px;left:1657.30px;top:80.74px;font-size:12px;line-height:20px;color:#262626;">Find</div>
<div class="t" style="letter-spacing:-0.433px;left:1657.30px;top:107.14px;font-size:12px;line-height:20px;color:#262626;">Replace</div>
<div class="t" style="letter-spacing:-0.443px;left:1657.00px;top:132.74px;font-size:12px;line-height:20px;color:#262626;">Select</div>
<div class="t" style="letter-spacing:0.351px;left:1652.40px;top:154.09px;font-size:11px;line-height:20px;color:#262626;">Editing</div>
<div class="t" style="letter-spacing:-0.160px;left:1729.60px;top:113.54px;font-size:12px;line-height:20px;color:#262626;">Editor</div>
<div class="t" style="letter-spacing:0.275px;left:1729.60px;top:154.09px;font-size:11px;line-height:20px;color:#262626;">Editor</div>
<div class="a" style="left:0px;top:1006px;width:1907px;height:21px;background:#f4f4f4;border-top:1px solid #fbfbfb;box-sizing:border-box"></div>
<div class="t" style="letter-spacing:-0.116px;left:-2.50px;top:1007.39px;font-size:11px;line-height:20px;color:#3b3b3b;">Page 63 of 147</div>
<div class="t" style="letter-spacing:0.036px;left:90.60px;top:1007.39px;font-size:11px;line-height:20px;color:#3b3b3b;">18447 words</div>
<div class="t" style="letter-spacing:0.061px;left:206.00px;top:1007.39px;font-size:11px;line-height:20px;color:#3b3b3b;">Vietnamese</div>
<div class="t" style="letter-spacing:0.098px;left:340.10px;top:1007.39px;font-size:11px;line-height:20px;color:#3b3b3b;">Text Predictions: On</div>
<div class="t" style="letter-spacing:0.111px;left:479.40px;top:1007.39px;font-size:11px;line-height:20px;color:#3b3b3b;">Accessibility: Investigate</div>
<div class="t" style="letter-spacing:-0.234px;left:1566.60px;top:1007.39px;font-size:11px;line-height:20px;color:#3b3b3b;">Focus</div>
<div class="a" style="left:1648.2px;top:1007px;width:39.6px;height:20px;background:#dcdcdc;"></div>
<div class="t" style="letter-spacing:-0.777px;left:1874.00px;top:1007.39px;font-size:11px;line-height:20px;color:#3b3b3b;">70%</div>
<svg class="a" style="left:0px;top:0px;pointer-events:none" width="1907" height="1027" viewBox="0 0 1907 1027"><path d="M181.5 1024 H174.5 V1011.5 H181.5 M181.5 1024 V1011.5 H188 V1017.5" fill="none" stroke="#333" stroke-width="1.1"/><path d="M183 1019.5 L188.3 1024.8 M188.3 1019.5 L183 1024.8" stroke="#333" stroke-width="1.1"/><circle cx="467.5" cy="1011.8" r="1.8" fill="none" stroke="#333" stroke-width="1"/><path d="M461.5 1014.5 Q467.5 1016.3 473.5 1014.5 M465 1015.6 V1019 L463.3 1024 M470 1015.6 V1018" fill="none" stroke="#333" stroke-width="1"/><path d="M470 1019.8 L474.6 1024.4 M474.6 1019.8 L470 1024.4" stroke="#333" stroke-width="1.1"/><path d="M1549.2 1013 V1010.5 H1551.5 M1560.5 1010.5 H1562.8 V1013 M1562.8 1021 V1023.5 H1560.5 M1551.5 1023.5 H1549.2 V1021" fill="none" stroke="#333" stroke-width="1"/><path d="M1552.8 1021.2 V1012.3 H1557 L1559.7 1015 V1021.2 Z M1557 1012.3 V1015 H1559.7" fill="none" stroke="#333" stroke-width="1"/><path d="M1621 1011 H1627.3 V1022.5 H1621 Z M1627.3 1011 H1633.8 V1022.5 H1627.3 M1622.6 1014 H1626 M1622.6 1016.8 H1626 M1622.6 1019.6 H1626 M1628.8 1014 H1632.2 M1628.8 1016.8 H1632.2 M1628.8 1019.6 H1632.2" fill="none" stroke="#333" stroke-width="1"/><path d="M1662.2 1010.8 H1673.3 V1023.5 H1662.2 Z M1664.3 1013.6 H1671.2 M1664.3 1016.2 H1671.2 M1664.3 1018.8 H1671.2 M1664.3 1021.3 H1671.2" fill="none" stroke="#333" stroke-width="1"/><path d="M1712 1016.5 V1010.8 H1701.3 V1022.5 H1707.5 M1703.3 1013.6 H1710 M1703.3 1016.2 H1708 M1703.3 1018.8 H1706.3" fill="none" stroke="#333" stroke-width="1"/><circle cx="1711.6" cy="1021.3" r="3.6" fill="#f3f3f3" stroke="#333" stroke-width="1"/><path d="M1708 1021.3 H1715.2 M1711.6 1017.7 V1024.9" stroke="#333" stroke-width="0.9"/><path d="M1733.5 1017 H1741.5" stroke="#333" stroke-width="1.2"/><path d="M1747 1017.3 H1847" stroke="#777" stroke-width="1"/><path d="M1797.5 1014 V1020.5" stroke="#777" stroke-width="1"/><rect x="1779.2" y="1012" width="4.8" height="10.7" fill="#666"/><path d="M1852.2 1017 H1860.2 M1856.2 1013 V1021" stroke="#333" stroke-width="1.2"/></svg>
</body></html>
